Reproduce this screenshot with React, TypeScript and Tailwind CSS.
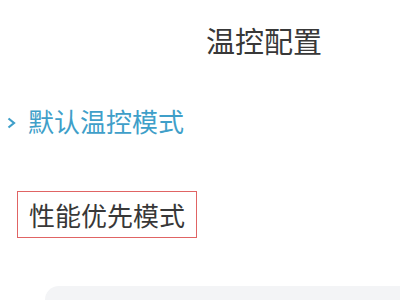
import React from 'react';

const App: React.FC = () => {
    return (
        <div
            className="w-[400px] h-[300px] bg-white overflow-hidden flex flex-col"
            style={{ fontFamily: '"Noto Sans CJK SC", "Noto Sans", sans-serif' }}
        >
            {/* Title */}
            <h1 className="pl-[206px] mt-[26px] text-[29px] leading-none font-normal text-[#383838]">温控配置</h1>

            {/* Current mode */}
            <div className="flex items-center mt-[53px] pl-[7px]">
                <svg width="9" height="12" viewBox="0 0 9 12" className="mr-[12px] mt-[3px]">
                    <path d="M1.5 1.5 L7 6 L1.5 10.5" fill="none" stroke="#3f9fc9" strokeWidth="2.2" />
                </svg>
                <span className="text-[26px] leading-none text-[#3f9fc9]">默认温控模式</span>
            </div>

            {/* Selected option */}
            <div className="ml-[17px] mt-[57px] w-[180px] h-[47px] border border-[#e06464] flex items-center pl-[11px]">
                <span className="text-[26px] leading-none text-[#383838]">性能优先模式</span>
            </div>

            {/* Bottom panel */}
            <div className="ml-[45px] mt-[48px] flex-1 bg-[#f3f4f6] rounded-tl-[24px]" />
        </div>
    );
};

export default App;
